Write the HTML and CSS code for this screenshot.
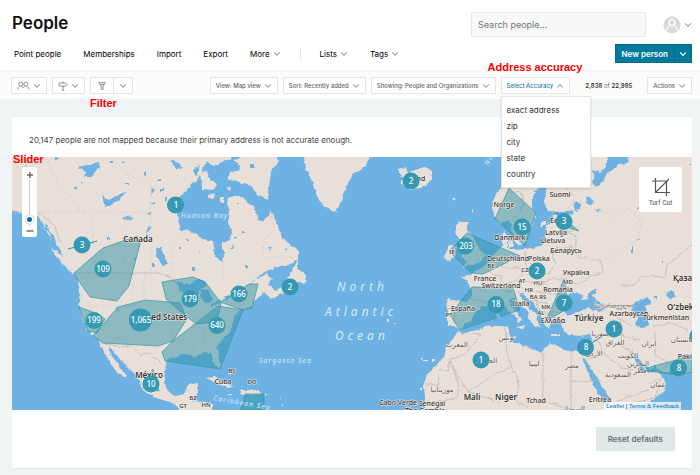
FILE: index.html
```html
<!DOCTYPE html>
<html lang="en">
<head>
<meta charset="utf-8">
<title>People</title>
<link rel="stylesheet" href="styles.css">
</head>
<body>
<svg class="defs" aria-hidden="true">
  <symbol id="down" viewBox="0 0 8 8"><path d="M1.2 2.4 4 5.4l2.8-3"/></symbol>
  <symbol id="up" viewBox="0 0 8 8"><path d="M1.2 5.4 4 2.4l2.8 3"/></symbol>
</svg>
<header class="header">
  <div class="title-row">
    <h1>People</h1>
    <input class="search" type="search" aria-label="Search people" placeholder="Search people...">
    <button class="account" aria-label="Account">
      <svg class="avatar" viewBox="0 0 18 18"><circle cx="9" cy="9" r="8.5" fill="#d9dada"/><g fill="none" stroke="#fff" stroke-width="1.1"><circle cx="9" cy="6.6" r="3"/><path d="M3.6 14.2c.4-3 2-4.200 3.800-4.700h3.200c1.800.5 3.400 1.700 3.800 4.700"/></g></svg>
      <svg class="chev"><use href="#down"/></svg>
    </button>
  </div>
  <div class="nav-row">
    <nav class="nav">
      <a href="#">Point people</a>
      <a href="#">Memberships</a>
      <a href="#">Import</a>
      <a href="#">Export</a>
      <a href="#">More <svg class="chev"><use href="#down"/></svg></a>
      <span class="divider"></span>
      <a href="#">Lists <svg class="chev"><use href="#down"/></svg></a>
      <a href="#">Tags <svg class="chev"><use href="#down"/></svg></a>
    </nav>
    <div class="new-person">
      <button>New person</button>
      <button aria-label="More ways to add"><svg class="chev"><use href="#down"/></svg></button>
    </div>
  </div>
</header>
<div class="toolbar">
  <button class="tool" aria-label="People">
    <svg class="glyph wide" viewBox="0 0 13 10"><circle cx="3.800" cy="3.200" r="2"/><circle cx="8.800" cy="3.200" r="2"/><path d="M.6 8.600c.3-2 1.200-2.800 2.200-3.400M4.800 5.200c.7.300 1.200.8 1.500 1.500.3-.7.800-1.200 1.500-1.500M9.800 5.200c1 .6 1.900 1.400 2.200 3.400"/></svg>
    <svg class="chev"><use href="#down"/></svg>
  </button>
  <button class="tool" aria-label="Paths">
    <svg class="glyph" viewBox="0 0 10 10"><path d="M1.500 2h6L9 3.600 7.500 5.200h-6L1 3.600zM5 .6V2M5 5.200v4M3.700 9.200h2.600"/></svg>
    <svg class="chev"><use href="#down"/></svg>
  </button>
  <div class="split">
    <button class="tool" aria-label="Filter"><svg class="glyph" viewBox="0 0 10 10"><path d="M1.800 1.700h6.600L6 5v3.800L4.200 8V5zM3 3.400h4.200"/></svg></button>
    <button class="tool" aria-label="Saved filters"><svg class="chev"><use href="#down"/></svg></button>
    <span class="note note-filter">Filter</span>
  </div>
  <button class="tool push">View: Map view <svg class="chev"><use href="#down"/></svg></button>
  <button class="tool">Sort: Recently added <svg class="chev"><use href="#down"/></svg></button>
  <button class="tool">Showing: People and Organizations <svg class="chev"><use href="#down"/></svg></button>
  <div class="accuracy">
    <button class="tool active" aria-expanded="true">Select Accuracy <svg class="chev"><use href="#up"/></svg></button>
    <div class="menu">
      <button>exact address</button>
      <button>zip</button>
      <button>city</button>
      <button>state</button>
      <button>country</button>
    </div>
    <span class="note note-accuracy">Address accuracy</span>
  </div>
  <span class="count"><b>2,838</b> of <b>22,985</b></span>
  <button class="tool">Actions <svg class="chev"><use href="#down"/></svg></button>
</div>
<main>
  <section class="card">
    <p class="notice">20,147 people are not mapped because their primary address is not accurate enough.</p>
    <div class="map">
      <svg class="world" viewBox="12 157 680 253" preserveAspectRatio="xMidYMid slice" role="img" aria-label="World map">
        <defs>
          <filter id="coast" x="0" y="0" width="1" height="1"><feTurbulence type="fractalNoise" baseFrequency=".18" numOctaves="3" seed="4"/><feDisplacementMap in="SourceGraphic" scale="4" xChannelSelector="R" yChannelSelector="G"/></filter>
        </defs>
        <g filter="url(#coast)">
          <rect class="sea" x="0" y="145" width="710" height="275"/>
          <g class="land">
            <path d="M5 150H242L231 158 222 162 214 166 206 161 202 172 198 178 190 186 182 195 173 200 177 210 178 220 181 230 190 231 203 239 213 241 214 248 216 257 222 262 224 252 222 242 230 240 232 232 228 222 230 212 227 204 228 197 243 197 249 204 254 206 258 219 262 222 269 216 270 211 277 225 282 238 291 245 298 250 298 260 288 264 275 268 262 273 252 282 246 288 255 280 267 273 272 279 268 285 276 290 288 284 292 287 285 293 271 299 264 292 256 300 252 306 240 310 234 316 232 326 230 332 222 340 217 347 218 356 220 365 218 369 214 362 211 353 203 352 195 357 184 353 175 357 167 359 165 371 164 382 168 392 176 396 184 394 188 385 198 383 198 391 193 401 205 402 212 404 212 415H184L175 404 160 399 147 393 141 387 140 381 132 371 122 361 115 353 109 346 109 353 115 360 121 368 126 377 122 377 115 370 108 359 102 348 98 339 91 334 84 323 80 311 79 300 80 290 77 278 70 271 62 263 54 254 56 246 49 236 42 224 36 213 22 212 5 209Z"/>
            <path d="M303 150 306 170 312 181 316 194 323 206 336 213 341 201 346 186 354 174 366 165 374 150Z"/>
            <path d="M228 157 236 160 245 153 276 150 279 162 272 168 270 178 268 200 258 194 248 185 236 181 228 180 231 172 240 170 238 163ZM200 172 207 171 210 180 217 184 214 190 202 189ZM208 195 214 193 213 198 208 198ZM220 197 223 197 223 202 220 202ZM226 188 231 187 230 191ZM292 270 298 261 298 269 306 275 305 284 296 281 289 285 287 278ZM206 378 216 377 228 385 235 387 226 388 216 383ZM241 390 258 390 262 394 241 395ZM227 394 233 394 230 396ZM263 394 267 394 266 396Z"/>
            <path d="M399 169 406 167 408 173 415 170 425 167 431 171 432 179 427 184 418 188 411 190 405 186 400 183 404 178 399 174ZM459 222 470 222 466 229 470 232 475 241 480 250 485 254 482 261 475 264 461 268 467 262 461 258 466 250 464 242 458 238 455 232ZM449 245 457 246 456 256 450 261 443 258 447 251ZM453 198 456 198 454 202ZM472 210 474 210 472 213Z"/>
            <path d="M700 150H540L528 163 512 178 497 192 492 203 494 216 500 223 509 220 512 229 514 240 519 246 525 243 528 234 533 225 536 214 532 207 532 196 541 185 548 180 546 192 544 202 548 211 560 212 573 210 572 214 553 215 550 222 546 228 546 241 540 246 526 249 513 250 508 247 508 236 503 231 502 246 492 256 486 265 477 270 471 275 461 276 468 283 472 290 472 298 468 302 447 299 448 309 448 325 454 326 459 330 452 340 446 348 444 358 435 366 427 375 423 386 425 396 423 404 426 415H700Z"/>
          </g>
          <g class="sea">
            <path d="M458 331 464 325 471 321 476 312 483 306 493 304 499 301 505 306 511 313 517 318 518 324 521 320 517 312 511 306 508 300 514 299 521 305 527 310 529 318 535 327 541 326 536 320 538 316 529 308 522 299 520 293 525 295 534 304 540 313 544 323 549 329 551 322 557 318 563 320 562 328 568 335 580 336 590 334 592 341 588 352 577 351 568 351 559 347 551 343 544 347 543 353 534 350 522 345 511 341 509 335 508 327 501 326 489 326 474 330 463 334Z"/>
            <path d="M564 312 563 303 569 294 576 292 583 295 581 300 589 299 588 293 597 288 593 297 601 303 606 309 599 312 588 308 577 313 568 315ZM582 358 584 357 591 369 598 380 606 392 612 403 607 406 600 397 592 382ZM632 348 636 356 643 363 650 369 657 364 656 369 662 372 700 373V415H644L621 409 648 403 660 395 666 386 665 380 657 371 648 373 639 370 635 361ZM633 303 641 300 649 297 651 304 645 306 648 314 648 325 642 329 636 325 637 317 631 309ZM608 155H629L628 163 619 164 615 169 607 173 603 181 596 187 592 182 595 175 591 170 600 172 606 167ZM573 204 577 201 581 204 580 210 575 211ZM586 198 590 196 593 203 590 206 587 203ZM596 208 600 210 598 212ZM666 294 672 290 676 296 671 299Z"/>
            <path d="M78 168 86 165 98 162 100 167 96 170 92 177 84 177 86 172ZM102 196 108 200 114 198 122 193 127 192 120 199 113 204 106 207 104 203ZM122 218 130 215 132 218 125 221ZM156 249 161 247 165 258 168 264 162 265 157 257ZM151 188 155 190 152 195ZM148 226 151 228 147 234ZM170 160 178 163 182 168 177 169ZM193 170 200 165 196 177ZM176 282 189 284 199 279 207 284 201 290 196 296 194 306 191 307 190 294 181 290ZM200 289 208 290 213 299 207 304 202 298ZM211 303 221 299 219 303 211 307ZM222 297 231 296 227 300ZM116 307 119 308 118 311ZM267 248 272 247 270 251ZM230 248 234 244 233 249Z"/>
            <path d="M55 158h4v2h-4zM110 161h3v2h-3zM122 162h3v2h-3zM126 183h3v2h-3zM75 187h2v2h-2zM144 173h2v3h-2zM158 180h3v2h-3zM160 189h4v2h-4zM152 202h3v2h-3zM165 198h2v3h-2zM148 212h3v2h-3zM107 238h3v2h-3zM134 258h2v3h-2zM152 263h3v4h-3zM81 182h3v1h-3zM179 247h2v2h-2zM186 239h2v2h-2zM199 250h2v2h-2zM192 267h3v4h-3zM207 240h3v1h-3zM234 237h3v2h-3zM242 231h3v2h-3zM284 249h3v2h-3zM250 165h4v4h-4zM237 202h2v2h-2zM245 266h2v2h-2zM661 262h3v1h-3zM631 246h2v6h-2zM637 239h3v1h-3zM654 296h3v2h-3zM689 163h2v2h-2zM637 207h2v2h-2z"/>
            <path d="M42 224 47 225 49 231 54 236 56 243 60 249 62 256 57 252 52 246 47 237Z"/>
          </g>
          <path class="land" d="M41 221l3 4 2 5-4-5zM47 230l3 4 1 5-4-6zM51 246l4 5 3 6-5-5zM496 307h3v5h-3zM496 314h4v4h-4zM517 326 525 325 523 330ZM551 334h9v2h-9zM580 342 587 340 583 344ZM420 388h2v2h-2zM421 358h2v2h-2zM387 320h2v2h-2zM394 323h2v1h-2zM424 360h4v1h-4zM432 359h2v2h-2zM540 221h6v5h-6zM509 242h4v5h-4zM229 372h3v3h-3zM280 397h1v2h-1zM282 404h1v2h-1z"/>
          <g class="frontier">
            <path d="M74 273H162L176 282M103 343 122 347 132 346 141 355 150 353 158 361 165 368M26 157V211M36 212 44 216 55 226 60 242"/>
            <path d="M447 309 454 308 455 324M472 299 492 303M486 267 493 275 502 276 501 287 506 292 520 291M502 252V268L518 267 523 274 514 282 503 284M525 251 526 270 541 276 550 273 555 263 551 249M551 249 572 247 579 257 600 260 603 271 590 277 578 284 566 279 549 279 540 285 526 281M545 234 560 230 575 235 577 247M560 214 571 217 573 231 560 232M507 193 520 190 524 204 514 220M566 188 575 197 568 209M535 291 547 294 562 294M532 300 543 302 555 309M545 314 562 311M526 290 535 298 540 311 548 314 555 317M590 336 607 334 621 335 622 346 636 355M590 341 599 340 602 352 586 360M602 352 621 367 636 369M571 351V410M571 381H601M543 353V400L570 410M505 328 507 352 512 367 495 374 468 392 450 362V359L466 354 481 334 472 334M449 361V371L440 369 438 384H425M450 362 459 385 457 398 438 402M512 367 520 385 515 400 528 408M468 392 485 397 500 403M607 311 620 319 632 326M620 319 622 335 640 340M653 326 672 323 688 330M657 318 674 315 691 321M655 331 655 355 671 365M649 384 661 378 655 398 624 405M615 403 626 398 649 390M620 285 634 285 642 276 665 277 667 265 692 245"/>
            <path class="dashed" d="M12 212H151V186L130 176 111 158M151 212V273M93 212V245M125 212V273M172 273V250L185 233M223 262V280M270 209 274 230 262 241 264 258 296 257M48 159 52 174 62 188 73 200 80 212M79 306H145M91 306 97 332M118 308V344M133 283V306M144 273V300M145 314H168M158 325H180M172 300V344M184 320 205 319M193 323V350M204 328V350M212 325 230 327M598 210 617 217 629 208 641 222 638 240 619 251 607 258"/>
          </g>
        </g>
        <g class="region">
          <path d="M74 273 103 248 137 236 140 244 129 286 117 301 90 297 78 280Z"/>
          <path d="M118 307 145 300 180 303 187 319 173 341 158 346 103 343 93 336Z"/>
          <path d="M79 307 98 314 105 319 97 333 88 331Z"/>
          <path d="M162 282 193 277 205 282 221 303 217 322 196 324 180 311 166 299Z"/>
          <path d="M220 302 249 284 258 284 252 308 243 310Z"/>
          <path d="M173 341 218 306 243 310 220 369 165 361 162 352Z"/>
          <path d="M153 369 159 391 143 388ZM68 249 97 241 83 245Z"/>
          <path d="M449 251 467 233 520 256 483 274 471 273Z"/>
          <path d="M509 188 536 213 525 246 495 219Z"/>
          <path d="M472 287 513 288 520 310 460 330 450 315Z"/>
          <path d="M564 279 568 302 562 312 546 321ZM556 212 579 231 563 226ZM579 351 614 329 585 347Z"/>
          <path d="M641 370 657 365 692 356V372L678 375ZM245 394H264V410H241Z"/>
        </g>
        <g class="ocean">
          <text x="181" y="218" class="small">Hudson Bay</text>
          <text x="337" y="291">North</text><text x="325" y="316">Atlantic</text><text x="335" y="340">Ocean</text>
          <text x="259" y="363" class="small">Sargasso Sea</text>
          <text class="small" transform="translate(213 400) rotate(10)">Caribbean Sea</text>
          <text class="small" transform="translate(488 166) rotate(-60)">Norwegian</text>
        </g>
        <g class="places">
          <g class="major"><text x="138" y="242">Canada</text><text x="161" y="320">United States</text><text x="149" y="378">México</text><text x="589" y="321">Türkiye</text><text x="472" y="400">Mali</text><text x="506" y="400">Niger</text><text x="694" y="281">Қазақстан</text><text x="690" y="310">O'zbekiston</text></g>
          <text x="415" y="181">Ísland</text><text x="504" y="207">Norge</text><text x="560" y="197">Suomi</text><text x="510" y="240">Danmark</text><text x="558" y="223">Eesti</text><text x="556" y="235">Latvija</text><text x="553" y="243">Lietuva</text><text x="566" y="253">Беларусь</text><text x="539" y="261">Polska</text><text x="508" y="261">Deutschland</text><text x="576" y="275">Україна</text><text x="485" y="281">France</text><text x="501" y="288">Switzerland</text><text x="463" y="311">España</text><text x="521" y="306">Italia</text><text x="558" y="292">România</text><text x="553" y="323">Ελλάδα</text><text x="629" y="316">Azərbaycan</text><text x="666" y="320">Türkmenistan</text><text x="536" y="403">Tchad</text><text x="600" y="402">Eritrea</text><text x="398" y="405">Cabo Verde</text><text x="432" y="406">Sénégal</text><text x="425" y="413">The Gambia</text><text x="223" y="384">Cuba</text><text x="692" y="359">Pakistan</text>
          <g class="code"><text x="232" y="373">BS</text><text x="252" y="384">DO</text><text x="193" y="400">BZ</text><text x="183" y="408">GT</text><text x="206" y="407">HN</text><text x="452" y="254">IE</text><text x="491" y="268">BE</text><text x="449" y="317">PT</text><text x="525" y="272">CZ</text><text x="522" y="283">AT</text><text x="538" y="285">HU</text><text x="529" y="292">HR</text><text x="538" y="299">BA RS</text><text x="546" y="309">MK</text><text x="541" y="315">AL</text><text x="568" y="284">MD</text></g>
          <g class="arabic"><text x="614" y="308" class="code">საქართველო</text><text x="457" y="347">المغرب</text><text x="487" y="363">الجزائر</text><text x="507" y="340">تونس</text><text x="534" y="366">ليبيا</text><text x="572" y="368">مصر</text><text x="442" y="392">موريتانيا</text><text x="618" y="377">السعودية</text><text x="615" y="345">العراق</text><text x="600" y="336">سوريا</text><text x="649" y="346">ایران</text><text x="628" y="358">الكويت</text><text x="638" y="366">البحرين</text><text x="640" y="373">قطر</text><text x="658" y="387">عمان</text><text x="594" y="356">الأردن</text><text x="685" y="342">افغانستان</text><text x="573" y="411">السودان</text></g>
        </g>
        <g class="clusters">
          <circle cx="175.500" cy="205" r="8.500"/><circle cx="82" cy="245" r="8.500"/><circle cx="103" cy="269" r="8.500"/><circle cx="190" cy="299" r="8.500"/><circle cx="239" cy="294" r="8.500"/><circle cx="290" cy="287" r="8.500"/><circle cx="94" cy="320.500" r="8.500"/><circle cx="140.500" cy="320" r="11.500"/><circle cx="217" cy="325.500" r="8.500"/><circle cx="151" cy="384" r="8.500"/><circle cx="411" cy="181" r="8.500"/><circle cx="465.500" cy="246" r="8.500"/><circle cx="522" cy="227" r="8.500"/><circle cx="564" cy="221.500" r="8.500"/><circle cx="537" cy="271" r="8.500"/><circle cx="496" cy="304.500" r="8.500"/><circle cx="564" cy="303" r="8.500"/><circle cx="614" cy="329" r="8.500"/><circle cx="585.500" cy="347.500" r="8.500"/><circle cx="481" cy="360" r="8.500"/><circle cx="678.500" cy="368" r="8.500"/><circle cx="698" cy="336" r="8.500"/>
          <text x="176" y="208">1</text><text x="82" y="248">3</text><text x="103" y="272">109</text><text x="190" y="302">179</text><text x="239" y="297">166</text><text x="290" y="290">2</text><text x="94" y="323">199</text><text x="141" y="323">1,065</text><text x="217" y="328">640</text><text x="151" y="387">10</text><text x="411" y="184">2</text><text x="466" y="249">203</text><text x="522" y="230">15</text><text x="564" y="224">3</text><text x="537" y="274">2</text><text x="496" y="307">18</text><text x="564" y="306">7</text><text x="614" y="332">1</text><text x="586" y="350">8</text><text x="481" y="363">1</text><text x="679" y="371">8</text>
        </g>
      </svg>
      <div class="zoom">
        <button aria-label="Zoom in"><svg viewBox="0 0 8 8"><path d="M4 1v6M1 4h6"/></svg></button>
        <input type="range" min="0" max="18" value="1" aria-label="Zoom level">
        <button aria-label="Zoom out"><svg viewBox="0 0 8 8"><path d="M.5 4h7"/></svg></button>
      </div>
      <button class="turf"><svg viewBox="0 0 20 20"><path d="M1 4h14.500v15M4.500 1v14.500H19M4.500 15.500 18 2"/></svg>Turf Cut</button>
      <div class="credit"><a href="#">Leaflet</a> | <a href="#">Terms &amp; Feedback</a></div>
      <span class="note note-slider">Slider</span>
    </div>
    <div class="actions"><button class="reset">Reset defaults</button></div>
  </section>
</main>
</body>
</html>
```

FILE: styles.css
```css
* { box-sizing: border-box; }
body { margin: 0; background: #f0f4f5; color: #1c1c1c; font: 8px/12px Inter, "Liberation Sans", sans-serif; }
button, input { font: inherit; color: inherit; margin: 0; padding: 0; border: 0; background: none; }
a { color: inherit; text-decoration: none; }
.defs { position: absolute; width: 0; height: 0; }
.chev { width: 8px; height: 8px; flex: none; fill: none; stroke: #777; stroke-width: 1; }
.header { background: #fff; padding: 12px 8px 7px 12px; border-bottom: 2px solid #f5f6f6; }
.title-row { display: flex; align-items: center; }
h1 { margin: 0 auto 3px 0; font-size: 17px; line-height: 22px; font-weight: 600; color: #111; }
.search { width: 175px; height: 25px; padding: 0 6px; border: 1px solid #e8eaea; background: #f7f9f9; font-size: 9px; appearance: none; }
.search::placeholder { color: #757575; }
.account { display: flex; align-items: center; gap: 3px; margin-left: 17px; }
.avatar { width: 18px; height: 18px; }
.nav-row { display: flex; align-items: center; justify-content: space-between; margin-top: 7px; }
.nav { display: flex; align-items: center; gap: 22px; padding-left: 2px; color: #000; }
.nav a { display: flex; align-items: center; gap: 3px; }
.divider { width: 1px; height: 12px; margin: 0 -3px; background: #e8e8e8; }
.new-person { display: flex; height: 19px; background: #007a9c; color: #fff; font-weight: 600; }
.new-person button { padding: 0 6px; border: 1px solid #006d8d; }
.new-person button + button { padding: 0 4px; border-left: 0; display: flex; align-items: center; }
.new-person .chev { stroke: #fff; stroke-width: 1.2; }
.toolbar { display: flex; align-items: center; gap: 5px; height: 27px; padding: 0 8px 0 11px; background: #fcfcfc; }
.tool { display: flex; align-items: center; justify-content: center; gap: 3px; height: 17px; padding: 0 5px; border: 1px solid #e4e6e6; background: #fff; color: #666; font-size: 6px; font-weight: 500; white-space: nowrap; }
.glyph { width: 10px; height: 10px; fill: none; stroke: #777; stroke-width: .8; }
.wide { width: 13px; }
.split { position: relative; display: flex; }
.split .tool { width: 24px; }
.split .tool + .tool { width: 19px; border-left: 0; }
.push { margin-left: auto; }
.accuracy { position: relative; }
.active { color: #1781a3; }
.menu { position: absolute; z-index: 3; top: 19px; left: 0; width: 90px; padding: 5px 0; background: #fff; border: 1px solid #e4e6e6; box-shadow: 0 1px 2px #0002; }
.menu button { display: block; width: 100%; height: 16px; padding: 0 5px; text-align: left; color: #333; }
.count { margin: 0 10px; font-size: 6px; color: #666; white-space: nowrap; }
.count b { font-weight: 600; color: #333; }
main { padding: 18px 8px 7px 12px; }
.card { background: #fff; border-bottom: 1px solid #e6eaeb; }
.notice { margin: 0; padding: 17px 17px 11px; color: #444; }
.map { position: relative; height: 253px; }
.world { display: block; width: 100%; height: 100%; }
.sea { fill: #6eb2e4; }
.land { fill: #e8e0d8; }
.frontier { fill: none; stroke: #b5b3af; stroke-width: .7; }
.dashed { stroke: #d3cdc7; stroke-dasharray: 5 2; }
.region { fill: #2f94a8; fill-opacity: .5; stroke: #3198ae; stroke-width: .7; }
.ocean { font: italic 12px "Noto Sans", sans-serif; fill: #d5ebf8; letter-spacing: 4px; }
.ocean .small { font-size: 7px; letter-spacing: 1px; }
.places { font: 500 7px "Noto Sans", sans-serif; fill: #333; text-anchor: middle; stroke: #f3eee9; stroke-width: 1px; paint-order: stroke; }
.major { font-size: 8px; font-weight: 600; }
.arabic { font: 7px "DejaVu Sans", sans-serif; fill: #555; }
.code { font-size: 6px; }
.clusters circle { fill: #3599b3; }
.clusters text { font: 500 8px "Noto Sans", sans-serif; fill: #fff; text-anchor: middle; }
.zoom { position: absolute; top: 10px; left: 10px; display: flex; flex-direction: column; align-items: center; width: 15px; padding: 3px 0 1px; border-radius: 2px; background: #fff; }
.zoom button { height: 10px; width: 15px; display: flex; align-items: center; justify-content: center; }
.zoom svg { width: 8px; height: 8px; stroke: #666; stroke-width: 1.4; }
.zoom input { width: 9px; height: 46px; appearance: none; writing-mode: vertical-lr; direction: rtl; }
.zoom input::-webkit-slider-runnable-track { width: 1px; background: #ccc; }
.zoom input::-webkit-slider-thumb { appearance: none; width: 9px; height: 9px; margin-left: -4px; border: 2px solid #fff; border-radius: 50%; background: #00709a; box-shadow: 0 0 1px #777; }
.turf { position: absolute; top: 10px; right: 10px; display: flex; flex-direction: column; align-items: center; width: 43px; padding: 10px 0 3px; border-radius: 2px; background: #fff; color: #555; font-size: 6px; font-weight: 500; }
.turf svg { width: 20px; height: 20px; fill: none; stroke: #555; stroke-width: 1.2; }
.credit { position: absolute; right: 11px; bottom: 0; padding: 0 2px; background: #fffb; font: 6px/8px "Liberation Sans", sans-serif; }
.credit a { color: #0078a8; }
.actions { display: flex; justify-content: flex-end; padding: 17px; }
.reset { height: 24px; padding: 0 12px; background: #e1e8e8; color: #687174; font-weight: 600; }
.note { position: absolute; z-index: 4; color: #f00; font: bold 11px/12px "Liberation Sans", sans-serif; white-space: nowrap; }
.note-filter { top: 20px; left: 0; }
.note-accuracy { top: -16px; left: -13px; }
.note-slider { top: -4px; left: 1px; }
```
